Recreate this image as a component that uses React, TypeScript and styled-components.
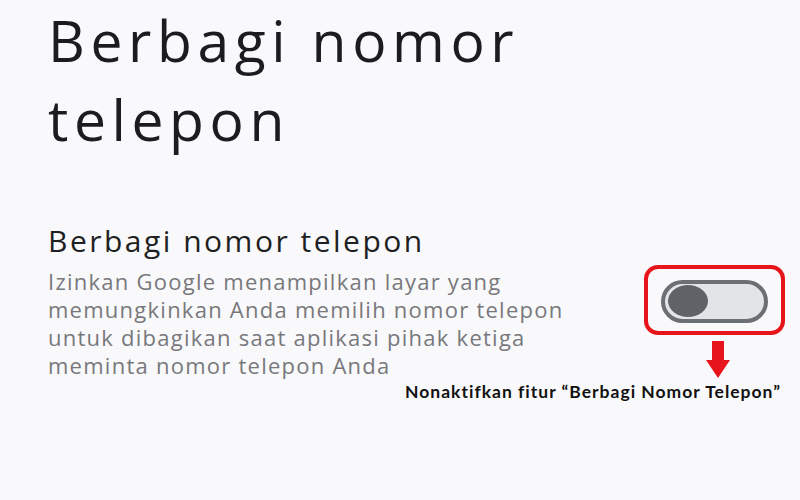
import React from 'react';
import styled, { createGlobalStyle } from 'styled-components';

const GlobalStyle = createGlobalStyle`
  html, body {
    margin: 0;
    padding: 0;
    background: #f9f9fb;
  }
  * {
    box-sizing: border-box;
  }
`;

const App: React.FC = () => {
  return (
    <>
      <GlobalStyle />
      <Page>
        <Title>
          Berbagi nomor
          <br />
          telepon
        </Title>
        <Setting>
          <SettingText>
            <SettingTitle>Berbagi nomor telepon</SettingTitle>
            <SettingDesc>
              Izinkan Google menampilkan layar yang
              <br />
              memungkinkan Anda memilih nomor telepon
              <br />
              untuk dibagikan saat aplikasi pihak ketiga
              <br />
              meminta nomor telepon Anda
            </SettingDesc>
          </SettingText>
          <ToggleColumn>
            <Highlight>
              <Switch>
                <Knob />
              </Switch>
            </Highlight>
            <ArrowDown width="24" height="37" viewBox="0 0 24 37">
              <path d="M6 0 H18 V19 H24 L12 37 L0 19 H6 Z" fill="#e8141b" />
            </ArrowDown>
          </ToggleColumn>
        </Setting>
        <Caption>Nonaktifkan fitur “Berbagi Nomor Telepon”</Caption>
      </Page>
    </>
  );
};

const Page = styled.div`
  width: 800px;
  height: 500px;
  padding: 1px 15px 0 48px;
  display: flex;
  flex-direction: column;
  overflow: hidden;
  font-family: 'Open Sans', 'Noto Sans', sans-serif;
`;

const Title = styled.h1`
  margin: 0;
  font-weight: 400;
  font-size: 57px;
  line-height: 79px;
  color: #1c1c1e;
  letter-spacing: 5.6px;
`;

const Setting = styled.div`
  margin-top: 63px;
  display: flex;
  justify-content: space-between;
`;

const SettingText = styled.div`
  display: flex;
  flex-direction: column;
`;

const SettingTitle = styled.h2`
  margin: 0;
  font-weight: 400;
  font-size: 30px;
  line-height: 38px;
  color: #1e1f22;
  letter-spacing: 2.5px;
`;

const SettingDesc = styled.p`
  margin: 7px 0 0;
  font-size: 22px;
  line-height: 28px;
  color: #78787c;
  letter-spacing: 1.25px;
`;

const ToggleColumn = styled.div`
  margin-top: 43px;
  display: flex;
  flex-direction: column;
  align-items: center;
`;

const Highlight = styled.div`
  width: 141px;
  height: 70px;
  border: 4px solid #e8141b;
  border-radius: 14px;
  display: flex;
  align-items: center;
  justify-content: center;
  padding-top: 2px;
`;

const Switch = styled.div`
  width: 107px;
  height: 43px;
  border: 4px solid #6b6e73;
  border-radius: 22px;
  background: #e3e4e7;
  display: flex;
  align-items: center;
  padding-left: 3px;
`;

const Knob = styled.div`
  width: 40px;
  height: 32px;
  border-radius: 50%;
  background: #5f6368;
`;

const ArrowDown = styled.svg`
  margin-top: 6px;
  margin-left: 6px;
  display: block;
`;

const Caption = styled.div`
  align-self: flex-end;
  margin: 2px 4px 0 0;
  font-family: 'Lato', 'Open Sans', sans-serif;
  font-weight: 700;
  font-size: 17.5px;
  letter-spacing: 1px;
  color: #111111;
`;

export default App;
